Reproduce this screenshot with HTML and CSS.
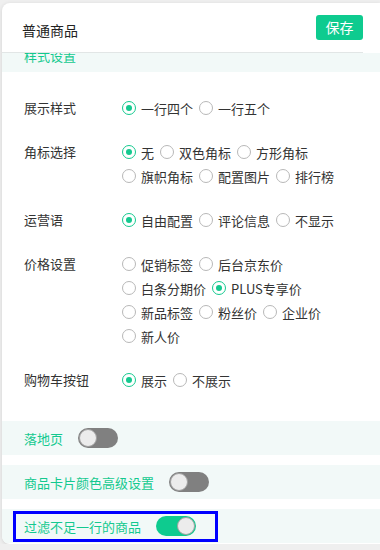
FILE: index.html
```html
<!DOCTYPE html>
<html>
<head>
    <title>普通商品</title>
    <link rel="stylesheet" href="styles.css">
</head>
<body>
    <div class="card">
        <div class="card-header">
            <span class="card-title">普通商品</span>
            <button class="btn-save">保存</button>
        </div>

        <div class="section-bar">
            <span class="section-title">样式设置</span>
        </div>

        <div class="fields">
            <div class="field">
                <div class="field-label">展示样式</div>
                <div class="options">
                    <label class="option checked"><span class="radio"></span>一行四个</label>
                    <label class="option"><span class="radio"></span>一行五个</label>
                </div>
            </div>

            <div class="field">
                <div class="field-label">角标选择</div>
                <div class="options">
                    <label class="option checked"><span class="radio"></span>无</label>
                    <label class="option"><span class="radio"></span>双色角标</label>
                    <label class="option"><span class="radio"></span>方形角标</label>
                    <label class="option"><span class="radio"></span>旗帜角标</label>
                    <label class="option"><span class="radio"></span>配置图片</label>
                    <label class="option"><span class="radio"></span>排行榜</label>
                </div>
            </div>

            <div class="field">
                <div class="field-label">运营语</div>
                <div class="options">
                    <label class="option checked"><span class="radio"></span>自由配置</label>
                    <label class="option"><span class="radio"></span>评论信息</label>
                    <label class="option"><span class="radio"></span>不显示</label>
                </div>
            </div>

            <div class="field">
                <div class="field-label">价格设置</div>
                <div class="options">
                    <label class="option"><span class="radio"></span>促销标签</label>
                    <label class="option"><span class="radio"></span>后台京东价</label>
                    <label class="option"><span class="radio"></span>白条分期价</label>
                    <label class="option checked"><span class="radio"></span>PLUS专享价</label>
                    <label class="option"><span class="radio"></span>新品标签</label>
                    <label class="option"><span class="radio"></span>粉丝价</label>
                    <label class="option"><span class="radio"></span>企业价</label>
                    <label class="option"><span class="radio"></span>新人价</label>
                </div>
            </div>

            <div class="field">
                <div class="field-label">购物车按钮</div>
                <div class="options">
                    <label class="option checked"><span class="radio"></span>展示</label>
                    <label class="option"><span class="radio"></span>不展示</label>
                </div>
            </div>
        </div>

        <div class="switch-bar">
            <span class="switch-label">落地页</span>
            <span class="switch"><span class="knob"></span></span>
        </div>

        <div class="switch-bar">
            <span class="switch-label">商品卡片颜色高级设置</span>
            <span class="switch"><span class="knob"></span></span>
        </div>

        <div class="switch-bar last">
            <div class="highlight">
                <span class="switch-label">过滤不足一行的商品</span>
                <span class="switch on"><span class="knob"></span></span>
            </div>
        </div>
    </div>
</body>
</html>
```

FILE: styles.css
```css
body {
    margin: 0;
    background-color: #efefef;
    font-family: "Noto Sans CJK SC", "Noto Sans", sans-serif;
    font-size: 13px;
    color: #333;
    overflow: hidden;
}

.card {
    margin: 3px 0 0 2px;
    width: 378px;
    height: 541px;
    background-color: #fff;
    border-radius: 8px 0 0 8px;
    box-shadow: 0 1px 4px rgba(0, 0, 0, 0.12);
    overflow: hidden;
}

.card-header {
    display: flex;
    justify-content: space-between;
    align-items: flex-start;
    margin-right: 17px;
    padding: 12px 0 12px 20px;
    border-bottom: 1px solid #e2e6e6;
    height: 25px;
}

.card-title {
    font-size: 14px;
    color: #222;
    line-height: 25px;
    padding-top: 3px;
}

.btn-save {
    width: 47px;
    height: 25px;
    padding: 0;
    border: none;
    border-radius: 3px;
    background-color: #0ecb8f;
    color: #fff;
    font-family: inherit;
    font-size: 14px;
    line-height: 25px;
}

.section-bar {
    height: 19px;
    background-color: #f2f9f8;
    padding-left: 22px;
    overflow: hidden;
}

.section-title {
    display: block;
    margin-top: -7px;
    line-height: 20px;
    color: #14c98f;
}

.fields {
    padding: 24px 0 29px;
}

.field {
    display: flex;
    margin-bottom: 20px;
}

.field:last-child {
    margin-bottom: 0;
}

.field-label {
    width: 120px;
    padding-left: 22px;
    box-sizing: border-box;
    line-height: 24px;
    flex-shrink: 0;
}

.options {
    display: flex;
    flex-wrap: wrap;
    width: 244px;
}

.option {
    display: flex;
    align-items: center;
    height: 24px;
    margin-right: 6px;
    white-space: nowrap;
}

.radio {
    width: 12px;
    height: 12px;
    margin-right: 5px;
    border: 1px solid #b8b8b8;
    border-radius: 50%;
    background-color: #fff;
    display: flex;
    align-items: center;
    justify-content: center;
}

.option.checked .radio {
    border-color: #14c98f;
}

.option.checked .radio::after {
    content: "";
    width: 6px;
    height: 6px;
    border-radius: 50%;
    background-color: #14c98f;
}

.switch-bar {
    display: flex;
    align-items: center;
    height: 34px;
    margin-bottom: 10px;
    padding-left: 22px;
    background-color: #f2f9f8;
}

.switch-bar.last {
    margin-bottom: 0;
    padding-left: 11px;
}

.switch-label {
    color: #14c98f;
}

.switch {
    display: flex;
    align-items: center;
    width: 40px;
    height: 20px;
    margin-left: 15px;
    padding: 0 1px;
    box-sizing: border-box;
    border-radius: 10px;
    background-color: #808080;
}

.switch.on {
    justify-content: flex-end;
    background-color: #0ecb8f;
}

.knob {
    width: 16px;
    height: 16px;
    border: 1px solid #a0a0a0;
    border-radius: 50%;
    background-color: #ececec;
}

.highlight {
    display: flex;
    align-items: center;
    height: 25px;
    padding: 0 19px 0 8px;
    border: 3px solid #0000ff;
}
```
